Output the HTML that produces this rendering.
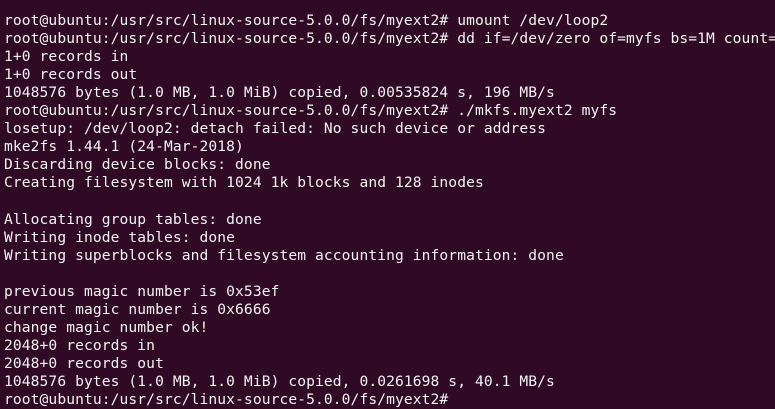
<!DOCTYPE html>
<html><head><style>
html,body{margin:0;padding:0;width:775px;height:405px;overflow:hidden;background:#300a24;}
pre{margin:0;position:absolute;left:4px;top:12px;font-family:"DejaVu Sans Mono","Liberation Mono",monospace;font-size:14.6px;letter-spacing:0.1px;line-height:18.05px;color:#f4f4f4;white-space:pre;}
</style></head><body>
<pre>root@ubuntu:/usr/src/linux-source-5.0.0/fs/myext2# umount /dev/loop2
root@ubuntu:/usr/src/linux-source-5.0.0/fs/myext2# dd if=/dev/zero of=myfs bs=1M count=1
1+0 records in
1+0 records out
1048576 bytes (1.0 MB, 1.0 MiB) copied, 0.00535824 s, 196 MB/s
root@ubuntu:/usr/src/linux-source-5.0.0/fs/myext2# ./mkfs.myext2 myfs
losetup: /dev/loop2: detach failed: No such device or address
mke2fs 1.44.1 (24-Mar-2018)
Discarding device blocks: done
Creating filesystem with 1024 1k blocks and 128 inodes

Allocating group tables: done
Writing inode tables: done
Writing superblocks and filesystem accounting information: done

previous magic number is 0x53ef
current magic number is 0x6666
change magic number ok!
2048+0 records in
2048+0 records out
1048576 bytes (1.0 MB, 1.0 MiB) copied, 0.0261698 s, 40.1 MB/s
root@ubuntu:/usr/src/linux-source-5.0.0/fs/myext2# </pre>
</body></html>
